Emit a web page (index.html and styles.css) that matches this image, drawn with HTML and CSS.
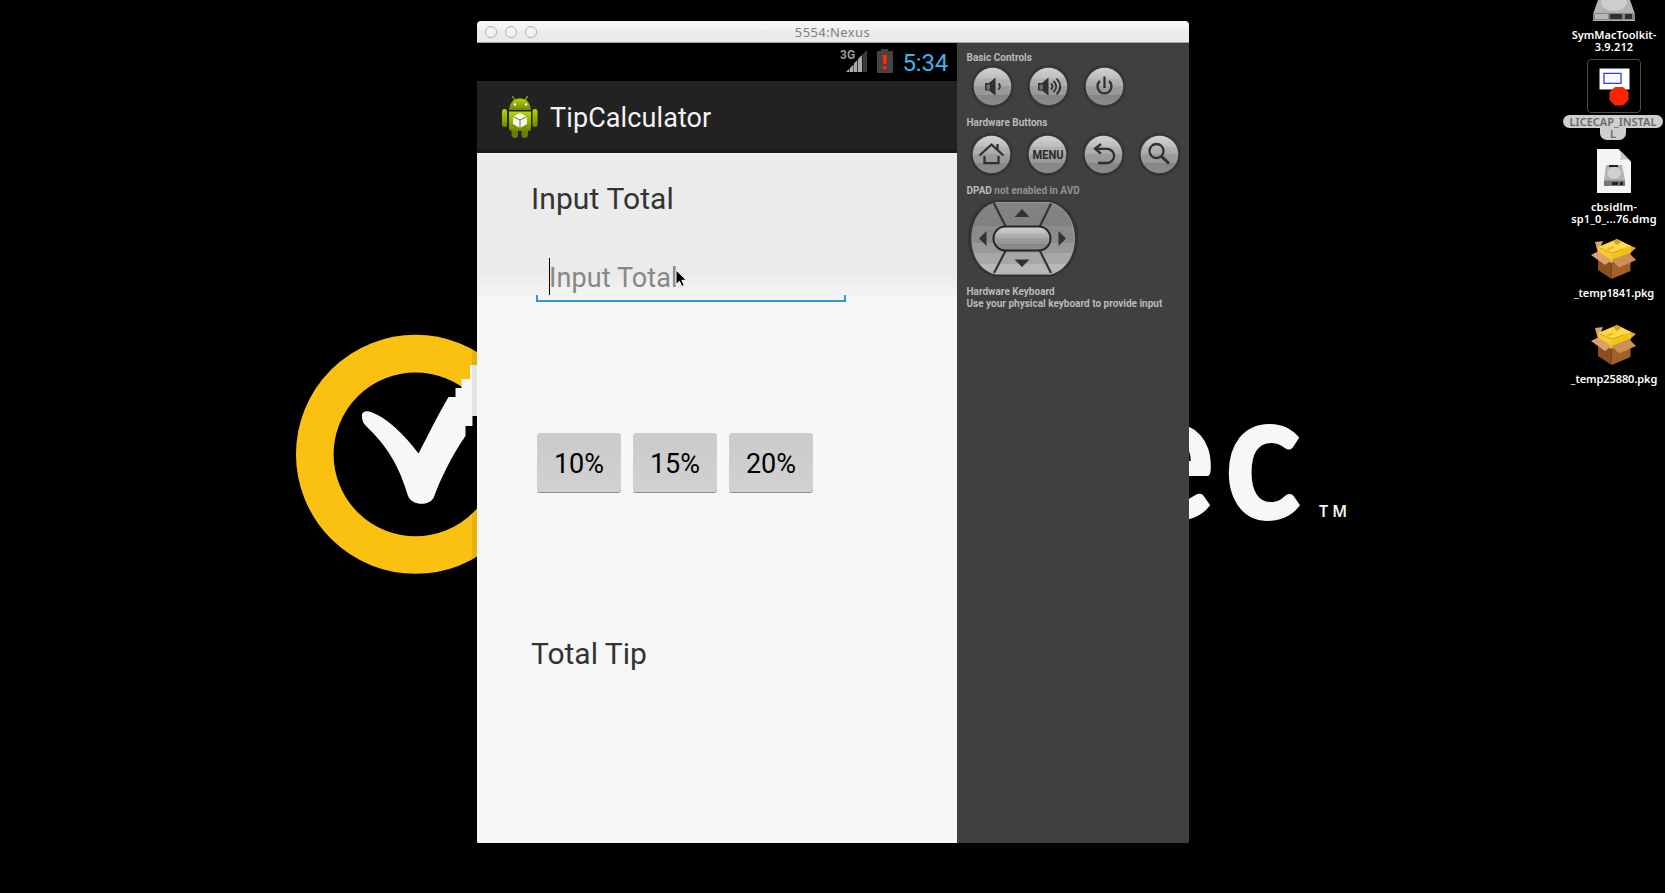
FILE: index.html
```html
<!DOCTYPE html>
<html lang="en">
<head>
<meta charset="utf-8">
<title>5554:Nexus</title>
<link rel="stylesheet" href="styles.css">
</head>
<body>
<main class="desktop">
  <svg class="wallpaper" viewBox="0 0 1665 893" aria-hidden="true">
    <circle cx="415.5" cy="454.3" r="100.7" fill="none" stroke="#fbc110" stroke-width="37.6"/>
    <path fill="#f7f7f7" d="M362 417C361 412 366 410 371 412C386 417 403 433 418.500 453.500C428 435 438 415 448.500 397H455.500V388H461.500V379H470V365H480V416H472.500V426H465.500V436C451 457 441 478 433.500 498C429 506 412 506 408 496C399 466 388 447 366 426Q362 422 362 417Z"/>
    <path fill="#000" opacity=".08" d="M472 340h5v240h-5z"/>
    <text class="brand" transform="translate(1129 519.500) scale(.88 1)">e</text>
    <text class="brand" transform="translate(1224 519.500) scale(.88 1)">c</text>
    <text class="trade" x="1319" y="517" textLength="28">TM</text>
  </svg>

  <section class="window">
    <header class="titlebar">
      <div class="lights"><i></i><i></i><i></i></div>
      <span class="title">5554:Nexus</span>
    </header>
    <div class="body">
      <div class="phone">
        <div class="status">
          <svg width="28" height="24" viewBox="0 0 28 24">
            <text class="net" x="0" y="10">3G</text>
            <path fill="#aaa" d="M6 23l3.500-3.500V23zM10 23v-4l3.500-3.500V23zM14 23v-8.500l3.300-3.500v12zM18 23V10l4-4v17z"/>
            <path fill="#3c3c3c" d="M22.500 23V5.500L27 1v22z"/>
          </svg>
          <svg class="battery" width="16" height="24" viewBox="0 0 16 24">
            <path fill="#444" d="M0 2h4V0h7v2h5v22H0z"/>
            <path fill="#ff2a00" d="M5.500 6h4.500l-.7 9h-3zM5.700 17h4v3.300h-4z"/>
          </svg>
          <span class="clock">5:34</span>
        </div>
        <div class="actionbar">
          <svg width="36" height="42" viewBox="0 0 36 42">
            <defs><linearGradient id="droid" x2="0" y2="1"><stop stop-color="#b6d900"/><stop offset="1" stop-color="#6d8600"/></linearGradient></defs>
            <g fill="url(#droid)">
              <path d="M10 .500l1-.500 2.500 4h-1.500zM26 .500l-1-.500-2.500 4H24z"/>
              <path d="M7 14C8 6 12 2.500 18 2.500S28 6 29 14z"/>
              <path d="M7 15.500h22V32q0 3-3 3H10q-3 0-3-3z"/>
              <rect x="0" y="13" width="5" height="18" rx="2.500"/>
              <rect x="30.500" y="13" width="5" height="18" rx="2.500"/>
              <path fill="#687b0c" d="M9.500 35H16v4q0 3-3 3t-3.500-3zM19.500 35H26v4q-.5 3-3.500 3t-3-3z"/>
            </g>
            <circle cx="13" cy="8.500" r="1.200" fill="#fff"/><circle cx="24" cy="8.500" r="1.200" fill="#fff"/>
            <path fill="#f5f7e8" d="M18 17l7 3.500v7.500l-7 4-7-4v-7.500z"/>
            <path fill="none" stroke="#6c7438" d="M11 20.500l7 3.500 7-3.500M18 24v8"/>
          </svg>
          <h1 class="appname">TipCalculator</h1>
        </div>
        <div class="content">
          <div class="label">Input Total</div>
          <div class="field"><span class="hint">Input Total</span></div>
          <div class="tips">
            <button class="tip">10%</button>
            <button class="tip">15%</button>
            <button class="tip">20%</button>
          </div>
          <div class="label">Total Tip</div>
        </div>
      </div>

      <aside class="controls">
        <svg class="defs" width="0" height="0">
          <defs>
            <linearGradient id="metal" x2="0" y2="1">
              <stop stop-color="#d2d2d2"/><stop offset=".28" stop-color="#bebebe"/><stop offset=".3" stop-color="#b2b2b2"/>
              <stop offset=".5" stop-color="#aaa"/><stop offset=".5" stop-color="#9c9c9c"/><stop offset=".72" stop-color="#979797"/>
              <stop offset=".72" stop-color="#858585"/><stop offset="1" stop-color="#8c8c8c"/>
            </linearGradient>
            <linearGradient id="pad" x2="0" y2="1">
              <stop stop-color="#858585"/><stop offset=".32" stop-color="#808080"/><stop offset=".32" stop-color="#8b8b8b"/>
              <stop offset=".56" stop-color="#8b8b8b"/><stop offset=".56" stop-color="#999"/><stop offset=".7" stop-color="#999"/>
              <stop offset=".7" stop-color="#a8a8a8"/><stop offset=".85" stop-color="#a8a8a8"/><stop offset=".85" stop-color="#b8b8b8"/>
            </linearGradient>
            <g id="knob"><circle cx="22.500" cy="22.500" r="21.500" fill="#353535"/><circle cx="22.500" cy="22.500" r="18.800" fill="url(#metal)"/></g>
          </defs>
        </svg>
        <div class="caption">Basic Controls</div>
        <div class="keys basic">
          <svg class="key" viewBox="0 0 45 45"><use href="#knob"/>
            <path fill="#303030" d="M15 19h4l6.500-5.500v18L19 26.500h-4z"/><path fill="#aaa" d="M16.500 20.500h3.500v5h-3.500z" opacity=".5"/>
            <path class="stroke" d="M28.500 19.500q3 3 0 6"/></svg>
          <svg class="key" viewBox="0 0 45 45"><use href="#knob"/>
            <path fill="#303030" d="M12 19h4l6.500-5.500v18L16 26.500h-4z"/><path fill="#aaa" d="M13.500 20.500h3.500v5h-3.500z" opacity=".5"/>
            <path class="stroke" d="M25 19.500q3 3 0 6M27.500 17q5.500 5.500 0 11M30.500 14.500q7.500 8 0 16"/></svg>
          <svg class="key" viewBox="0 0 45 45"><use href="#knob"/>
            <path class="stroke heavy" d="M18 17a7 7 0 1 0 9 0M22.500 12.500V24"/></svg>
        </div>
        <div class="caption">Hardware Buttons</div>
        <div class="keys hardware">
          <svg class="key" viewBox="0 0 45 45"><use href="#knob"/>
            <path class="stroke heavy" d="M10.500 23.500L22.500 12.500l12 11M28.500 12v5M15.500 24v7.200h14V24"/></svg>
          <svg class="key" viewBox="0 0 45 45"><use href="#knob"/>
            <text class="menu" x="23" y="27" textLength="31" lengthAdjust="spacingAndGlyphs">MENU</text></svg>
          <svg class="key" viewBox="0 0 45 45"><use href="#knob"/>
            <path class="stroke heavy" d="M20 12l-6 4.800 6 4.700M14 16.800h12a7 7 0 0 1 0 14.200h-9"/></svg>
          <svg class="key" viewBox="0 0 45 45"><use href="#knob"/>
            <circle class="stroke heavy" cx="19.500" cy="19" r="7"/><path class="stroke heavier" d="M24.500 24.500l7.500 7"/></svg>
        </div>
        <div class="caption">DPAD <span class="muted">not enabled in AVD</span></div>
        <svg class="dpad" width="110" height="79" viewBox="0 0 110 79">
          <path fill="#343434" d="M27 1H82C120 9 120 69 82 78H27C-9 69-9 9 27 1Z"/>
          <path fill="url(#pad)" d="M28 3.500H81C115 10 115 69 81 75.500H28C-5 69-5 10 28 3.500Z"/>
          <path fill="none" stroke="#c0c0c0" opacity=".6" d="M28 3.500H81C115 10 115 69 81 75.500"/>
          <path stroke="#343434" stroke-width="2.200" d="M26 4.500L38.500 29M83 4.500L71 29M26 74L38.500 50M83 74L71 50"/>
          <rect x="25.500" y="27.500" width="57" height="24" rx="12" fill="url(#metal)" stroke="#252525" stroke-width="2"/>
          <path fill="#333" d="M54 10l7.500 8h-15zM54 68l7.500-7.500h-15zM11 39.500l7.500-7.500v15zM98 39.500L90.500 32v15z"/>
        </svg>
        <div class="caption keyboard">Hardware Keyboard<br>Use your physical keyboard to provide input</div>
      </aside>
    </div>
  </section>

  <nav class="files">
    <div class="file disk">
      <svg width="44" height="24" viewBox="0 0 44 24">
        <path fill="#b4b4b4" d="M6 0H38L43 14V21H1V14z"/><ellipse cx="22" cy="2" rx="13" ry="9" fill="#cecece"/>
        <path fill="#858585" d="M1 13h42v7H1z"/><path fill="#303030" d="M18 14h12v5H18zM33 14h7v5h-7z"/><path fill="#b8b8b8" d="M3 14h13v5H3z"/>
      </svg>
      <span class="name">SymMacToolkit-<br><span class="wide">3.9.212</span></span>
    </div>
    <div class="file licecap">
      <div class="selected">
        <svg width="50" height="50" viewBox="0 0 50 50">
          <path fill="#fff" d="M9.500 6.500h30v21h-30z"/><path fill="#fff" stroke="#283cff" stroke-width="1.300" d="M14 11.300h17v10H14z"/>
          <path fill="#ff2500" d="M25 25h8l5.500 5v8L33 43.500h-8L19.500 38v-8z"/>
        </svg>
      </div>
      <span class="name picked"><b class="pill">LICECAP_INSTAL</b><b class="pill tail">L</b></span>
    </div>
    <div class="file dmg">
      <svg width="34" height="44" viewBox="0 0 34 44">
        <path fill="#f4f4f4" d="M0 0h21.500L34 12.500V44H0z"/><path fill="#c4c4c4" d="M21.500 0q4 5 1.500 11 6-2 11 1.500z"/>
        <path fill="#b2b2b2" d="M9 16h16l3 15v6H7v-6z"/><ellipse cx="17" cy="24" rx="7" ry="6" fill="#cfcfcf"/>
        <path fill="#777" d="M7 31.500h21V37H7z"/><path fill="#222" d="M12 16h9v2h-9zM15 33h6v3h-6zM23 33h3v3h-3z"/>
      </svg>
      <span class="name"><span class="wide">cbsidlm-</span><br><span class="wide">sp1_0_...76.dmg</span></span>
    </div>
    <div class="file pkg">
      <svg class="carton" width="45" height="42" viewBox="0 0 45 42">
        <g id="box">
        <path fill="#dda269" d="M4 4l8-1-5 12zM31 4l14 6-7 6-8-8z"/>
        <path fill="#8c4d21" d="M7 20l13.500-3V41L7 32z"/><path fill="#a2602b" d="M20.500 17l19-4v20l-19 8z"/>
        <path fill="#ffd84b" d="M7 9L26 1l14 7-19 7z"/><path fill="#f8ca2c" d="M7 9l14 6v10L7 18z"/><path fill="#f3c314" d="M21 15l19-7v7l-19 9z"/>
        <path fill="#c9a820" d="M22 3l4-2 4 3-4 3z"/><path fill="#eec02c" d="M15 11l6-3 3 1.500-6 3z"/>
        <path fill="#dea06d" d="M7 13.500l13.500 8.500L14 27 0 17z"/><path fill="#cf9058" d="M20.500 22L38 15l7 7-17 7.500z"/>
        </g>
      </svg>
      <span class="name tight">_temp1841.pkg</span>
    </div>
    <div class="file pkg">
      <svg class="carton" width="45" height="42" viewBox="0 0 45 42"><use href="#box"/></svg>
      <span class="name tight">_temp25880.pkg</span>
    </div>
  </nav>

  <svg class="pointer" width="14" height="20" viewBox="0 0 14 20">
    <path fill="#000" stroke="#fff" stroke-width="1" d="M1 1v14.500l3.400-3.200 2.400 5.200 2.500-1.100-2.400-5.100h4.600z"/>
  </svg>
</main>
</body>
</html>
```

FILE: styles.css
```css
* { box-sizing: border-box; }
body { margin: 0; background: #000; overflow: hidden; }
svg { display: block; flex: none; }

.desktop { position: relative; width: 1665px; height: 893px; padding: 21px 0 0 477px; overflow: hidden; background: #000; font-family: Roboto, sans-serif; }
.wallpaper { position: absolute; left: 0; top: 0; width: 1665px; height: 893px; }
.brand { font: 900 183px Lato, sans-serif; fill: #f7f7f7; }
.trade { font: 600 16px "Noto Sans", sans-serif; fill: #f7f7f7; }

.window { position: relative; width: 712px; height: 822px; border-radius: 4px 4px 2px 2px; overflow: hidden; }
.titlebar { display: grid; grid-template-columns: 60px 1fr 60px; align-items: center; height: 22px; padding: 0 0 0 8px; border-bottom: 1px solid #a5a5a5; background: linear-gradient(#f8f8f8 0, #f3f3f3 35%, #ebebeb 50%, #ebebeb); }
.lights { display: flex; gap: 8px; }
.lights i { width: 12px; height: 12px; border: 1.300px solid #b2b2b2; border-radius: 50%; background: #f2f2f2; }
.title { text-align: center; font: 13px/20px "Noto Sans", sans-serif; color: #808080; letter-spacing: .4px; margin-left: -9px; }
.body { display: flex; height: 800px; }

.phone { display: flex; flex-direction: column; width: 480px; background: #f7f7f7; }
.status { display: flex; align-items: flex-start; height: 38px; padding: 6px 0 0 363px; background: #000; }
.net { font: 700 12px Roboto, sans-serif; fill: #969696; }
.battery { margin-left: 9px; }
.clock { margin: 1px 0 0 9.500px; font-size: 24px; line-height: 27px; color: #41b1e6; letter-spacing: -.2px; }
.actionbar { display: flex; height: 72px; padding: 15px 0 0 25px; background: #222; border-bottom: 3px solid #191919; }
.appname { margin: 0 0 0 12px; font-size: 27px; line-height: 44px; font-weight: 400; color: #f3f3f3; letter-spacing: .1px; }
.content { flex: 1; padding: 28px 54px 0; background: linear-gradient(#ebebeb 0 120px, #f7f7f7 150px); color: #333; }
.label { font-size: 30px; line-height: 36px; letter-spacing: .1px; }
.field { width: 310px; height: 54px; margin: 31px 0 0 5px; padding: 10px 0 0 13px; background: linear-gradient(#2a9ad4, #2a9ad4) 0 100%/100% 2px no-repeat, linear-gradient(#2a9ad4, #2a9ad4) 0 100%/2px 7px no-repeat, linear-gradient(#2a9ad4, #2a9ad4) 100% 100%/2px 7px no-repeat; }
.hint { display: block; height: 37px; border-left: 1px solid #000; font-size: 27px; line-height: 41px; color: #878787; text-indent: -1px; letter-spacing: .1px; }
.tips { display: flex; gap: 12px; margin: 131px 0 0 6px; }
.tip { width: 84px; height: 60px; padding: 2px 0 0; border: 0; border-bottom: 1px solid #8c8c8c; border-radius: 3px; background: linear-gradient(#cbcbcb, #d1d1d1); font: 27px Roboto, sans-serif; color: #000; }
.tips + .label { margin-top: 143px; letter-spacing: 0; }

.controls { width: 232px; padding: 9px 0 0 9px; background: #404040; }
.defs { position: absolute; }
.caption { padding-left: .5px; font-size: 10px; line-height: 12px; font-weight: 700; color: #bababa; white-space: nowrap; }
.muted { color: #929292; }
.keys { display: flex; gap: 11px; }
.basic { margin: 0 0 8px 4px; }
.hardware { margin: 3px 0 8px 3px; }
.key { width: 45px; height: 45px; }
.stroke { fill: none; stroke: #303030; stroke-width: 1.800; }
.heavy { stroke-width: 2.300; }
.heavier { stroke-width: 3; }
.menu { font: 700 12px Roboto, sans-serif; text-anchor: middle; fill: #292929; }
.dpad { margin: 2px 0 8px 2px; }
.keyboard { line-height: 11.500px; }

.files { position: absolute; left: 1561px; top: 0; width: 106px; }
.file { display: flex; flex-direction: column; align-items: center; }
.name { text-align: center; font: 600 11px/12px "Noto Sans", sans-serif; color: #fff; white-space: nowrap; }
.wide { letter-spacing: .15px; }
.tight { letter-spacing: -.1px; }
.disk { height: 59px; }
.disk .name { margin-top: 5px; }
.licecap { height: 90px; }
.selected { padding: 2px; border: 1.500px solid #4b4b4b; border-radius: 4px; width: 54px; height: 54px; display: grid; place-items: center; }
.picked { display: flex; flex-direction: column; align-items: center; margin-top: 2px; margin-right: 2px; color: #696969; }
.pill { height: 13px; padding: 0 7px; border-radius: 7px; background: #cecece; line-height: 13px; font-weight: 600; }
.tail { height: 12px; padding: 0 10px; border-radius: 0 0 7px 7px; line-height: 11px; }
.dmg { height: 89px; }
.dmg .name { margin-top: 8px; }
.pkg { height: 86px; }
.pkg .name { margin-top: 7px; }
.carton { margin-right: 2px; }
.pointer { position: absolute; left: 675px; top: 269px; }
```
